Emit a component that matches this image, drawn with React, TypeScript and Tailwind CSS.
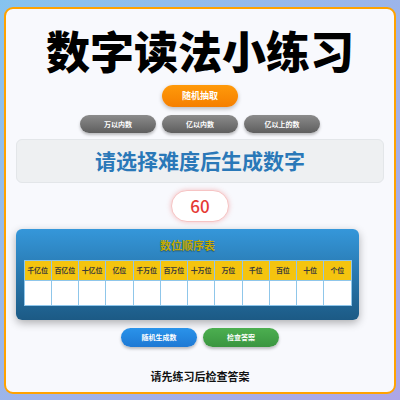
import React from "react";

const cols = ["千亿位", "百亿位", "十亿位", "亿位", "千万位", "百万位", "十万位", "万位", "千位", "百位", "十位", "个位"];

export default function App() {
  const font = { fontFamily: '"Noto Sans CJK SC", "Noto Sans", sans-serif' };
  return (
    <div
      className="w-[400px] h-[400px] bg-gradient-to-br from-[#86c3ef] to-[#ada6e6] pt-[7px] px-[4px]"
      style={font}
    >
      <div className="h-[387px] rounded-[9px] border-2 border-[#ffa200] bg-[#f8f9fd] flex flex-col items-center pt-[19px] px-[10px]">
        <h1 className="text-[44px] leading-[44px] font-black text-black tracking-[0px]">数字读法小练习</h1>
        <button className="mt-[13px] w-[76px] h-[22px] rounded-full bg-gradient-to-b from-[#ff9a0a] to-[#f57f00] text-white text-[9px] font-bold shadow-[0_2px_4px_rgba(0,0,0,0.25)]">
          随机抽取
        </button>
        <div className="mt-[8px] flex gap-[6px]">
          {["万以内数", "亿以内数", "亿以上的数"].map((t) => (
            <button
              key={t}
              className="w-[76px] h-[18px] rounded-full bg-gradient-to-b from-[#8c8c8c] to-[#5e5e5e] text-white text-[7px] font-bold shadow-[0_2px_3px_rgba(0,0,0,0.25)]"
            >
              {t}
            </button>
          ))}
        </div>
        <div className="mt-[6px] w-full h-[44px] rounded-[6px] bg-[#eef0f2] border border-[#e3e6e9] flex items-center justify-center">
          <span className="text-[21px] font-bold text-[#2a78b8]">请选择难度后生成数字</span>
        </div>
        <div className="mt-[7px] w-[58px] h-[32px] rounded-full bg-white border border-[#f6c4c4] shadow-[0_0_5px_rgba(240,120,120,0.45)] flex items-center justify-center">
          <span className="text-[17px] font-medium text-[#e53935]">60</span>
        </div>
        <div className="mt-[7px] self-start w-[343px] h-[91px] rounded-[6px] bg-gradient-to-b from-[#3597da] to-[#1c5a85] shadow-[0_3px_8px_rgba(0,0,0,0.3)] flex flex-col items-center pt-[8px]">
          <div className="text-[11px] leading-[16px] font-bold text-[#c2aa00] [text-shadow:0_1px_1px_rgba(0,0,0,0.35)]">数位顺序表</div>
          <div className="mt-[7px] w-[328px] grid grid-cols-12 border border-[#8fc6ea] bg-[#8fc6ea] gap-[1px]">
            {cols.map((c) => (
              <div key={c} className="h-[19px] bg-[#f4c40f] flex items-center justify-center text-[7px] font-bold text-[#3a3a3a]">
                {c}
              </div>
            ))}
            {cols.map((c) => (
              <div key={c + "b"} className="h-[24px] bg-white" />
            ))}
          </div>
        </div>
        <div className="mt-[8px] flex gap-[6px]">
          <button className="w-[76px] h-[19px] rounded-full bg-gradient-to-b from-[#2a93ea] to-[#1e79d4] text-white text-[7px] font-bold shadow-[0_2px_3px_rgba(0,0,0,0.25)]">
            随机生成数
          </button>
          <button className="w-[76px] h-[19px] rounded-full bg-gradient-to-b from-[#4caf50] to-[#3a9540] text-white text-[7px] font-bold shadow-[0_2px_3px_rgba(0,0,0,0.25)]">
            检查答案
          </button>
        </div>
        <div className="mt-[21px] text-[11px] leading-[16px] font-bold text-[#111]">请先练习后检查答案</div>
      </div>
    </div>
  );
}
